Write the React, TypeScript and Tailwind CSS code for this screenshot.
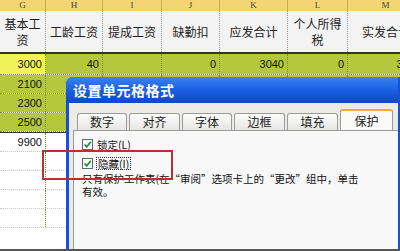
import React from "react";

const W = ["w-[46px]", "w-[57px]", "w-[59px]", "w-[58px]", "w-[68px]", "w-[60px]", "w-[76px]"];
const LETTERS = ["G", "H", "I", "J", "K", "L", "M"];

function Cell({ w, bg, children, last }: { w: string; bg: string; children?: React.ReactNode; last?: boolean }) {
  return (
    <div
      className={`${w} ${bg} shrink-0 h-full flex items-center justify-end pr-[3px] text-[11px] text-[#111] font-['Liberation_Sans',sans-serif] ${last ? "" : "border-r border-dotted border-[#7a8a30]"}`}
    >
      {children}
    </div>
  );
}

function DataRow({ vals, first, h, white }: { vals: string[]; first: string; h: string; white?: boolean }) {
  return (
    <div className={`flex ${h} border-b border-dotted ${white ? "border-[#c8c8c8]" : "border-[#7a8a30]"}`}>
      {W.map((w, i) => (
        <Cell key={i} w={w} bg={i === 0 ? first : white ? "bg-white" : "bg-[#b4c83e]"} last={i === 6}>
          {vals[i]}
        </Cell>
      ))}
    </div>
  );
}

function Check() {
  return (
    <div className="w-[11px] h-[11px] border border-[#5a6a7a] bg-white flex items-center justify-center shrink-0">
      <svg width="9" height="9" viewBox="0 0 9 9">
        <path d="M1.5 4.5 L3.7 6.8 L7.8 1.8" stroke="#1f9a2a" strokeWidth="1.8" fill="none" />
      </svg>
    </div>
  );
}

export default function App() {
  const tabs = [
    { t: "数字", w: "w-[50px]" },
    { t: "对齐", w: "w-[51px]" },
    { t: "字体", w: "w-[50px]" },
    { t: "边框", w: "w-[51px]" },
    { t: "填充", w: "w-[51px]" },
  ];
  return (
    <div className="relative w-[400px] h-[251px] overflow-hidden bg-white font-['Noto_Sans_CJK_SC',sans-serif]">
      <div className="flex flex-col w-[424px]">
        {/* letters */}
        <div className="flex h-[11px] bg-[#f4d574]">
          {W.map((w, i) => (
            <div
              key={i}
              className={`${w} shrink-0 flex items-center justify-center text-[9px] leading-none text-[#444] font-['Liberation_Serif',serif] border-r border-[#c8a850]`}
            >
              {LETTERS[i]}
            </div>
          ))}
        </div>
        {/* titles */}
        <div className="flex h-[41px] bg-[#f3f3f3] text-[12px] leading-[16px] text-[#222]">
          <div className={`${W[0]} shrink-0 flex items-center justify-center text-center border-r border-dotted border-[#999] px-[1px]`}>
            基本工<br />资
          </div>
          <div className={`${W[1]} shrink-0 flex items-center justify-center border-r border-dotted border-[#999]`}>工龄工资</div>
          <div className={`${W[2]} shrink-0 flex items-center justify-center border-r border-dotted border-[#999]`}>提成工资</div>
          <div className={`${W[3]} shrink-0 flex items-center justify-center border-r border-dotted border-[#999]`}>缺勤扣</div>
          <div className={`${W[4]} shrink-0 flex items-center justify-center border-r border-dotted border-[#999]`}>应发合计</div>
          <div className={`${W[5]} shrink-0 flex items-center justify-center text-center border-r border-dotted border-[#999]`}>
            个人所得<br />税
          </div>
          <div className={`${W[6]} shrink-0 flex items-center justify-center`}>实发合计</div>
        </div>
        <div className="h-[2px] bg-[#333]" />
        <DataRow h="h-[21px]" first="bg-[#f1f15a]" vals={["3000", "40", "", "0", "3040", "0", "3040"]} />
        <DataRow h="h-[19px]" first="bg-[#b4c83e]" vals={["2100", "", "", "", "", "", ""]} />
        <DataRow h="h-[19px]" first="bg-[#b4c83e]" vals={["2300", "", "", "", "", "", ""]} />
        <DataRow h="h-[19px]" first="bg-[#b4c83e]" vals={["2500", "", "", "", "", "", ""]} />
        <div className="h-[1px] bg-[#333]" />
        <DataRow h="h-[19px]" white first="bg-white" vals={["9900", "", "", "", "", "", ""]} />
        <DataRow h="h-[19px]" white first="bg-white" vals={["", "", "", "", "", "", ""]} />
        <DataRow h="h-[19px]" white first="bg-white" vals={["", "", "", "", "", "", ""]} />
        <DataRow h="h-[19px]" white first="bg-white" vals={["", "", "", "", "", "", ""]} />
        <DataRow h="h-[19px]" white first="bg-white" vals={["", "", "", "", "", "", ""]} />
      </div>

      {/* dialog */}
      <div className="absolute left-[66px] top-[77px] right-0 bottom-0 flex flex-col bg-[#1552d6] rounded-tl-[7px] pl-[3px] pr-[2px]">
        <div className="h-[26px] -ml-[3px] pl-[7px] flex items-center rounded-tl-[7px] bg-gradient-to-b from-[#3b82f2] via-[#1a5fe2] to-[#0c48c8] text-white text-[14px] font-bold tracking-[0.5px]">
          设置单元格格式
        </div>
        <div className="flex-1 flex flex-col bg-[#ecebe6]">
          <div className="h-[27px] flex items-end pl-[8px] gap-[2px]">
            {tabs.map((t) => (
              <div
                key={t.t}
                className={`${t.w} h-[17px] shrink-0 flex items-center justify-center text-[12px] text-[#222] border border-b-0 border-[#9a9a9a] rounded-t-[3px] bg-gradient-to-b from-[#fdfdfd] to-[#e6e6e2]`}
              >
                {t.t}
              </div>
            ))}
            <div className="w-[53px] h-[21px] shrink-0 flex items-center justify-center text-[12px] text-[#222] border border-b-0 border-[#9a9a9a] border-t-2 border-t-[#f0a93c] rounded-t-[3px] bg-[#f9f9f9]">
              保护
            </div>
          </div>
          <div className="flex-1 ml-[4px] border-l border-t border-[#9a9a9a] bg-[#f8f8f8] pl-[8px] pt-[7px] text-[10.5px] text-[#111]">
            <div className="flex items-center gap-[4px] h-[13px]">
              <Check />
              <span>锁定(L)</span>
            </div>
            <div className="flex items-center gap-[3px] h-[13px] mt-[6px]">
              <Check />
              <span className="border border-dotted border-[#333] px-[1px] leading-[11px]">隐藏(I)</span>
            </div>
            <div className="mt-[2px] leading-[13px] whitespace-nowrap">
              只有保护工作表(在“审阅”选项卡上的“更改”组中，单击
              <br />
              有效。
            </div>
          </div>
        </div>
      </div>

      {/* red highlight */}
      <div className="absolute left-[42px] top-[150px] w-[131px] h-[30px] border-2 border-[#b53232]" />
      <div className="absolute left-0 right-0 bottom-0 h-[2px] bg-[#555]" />
    </div>
  );
}
